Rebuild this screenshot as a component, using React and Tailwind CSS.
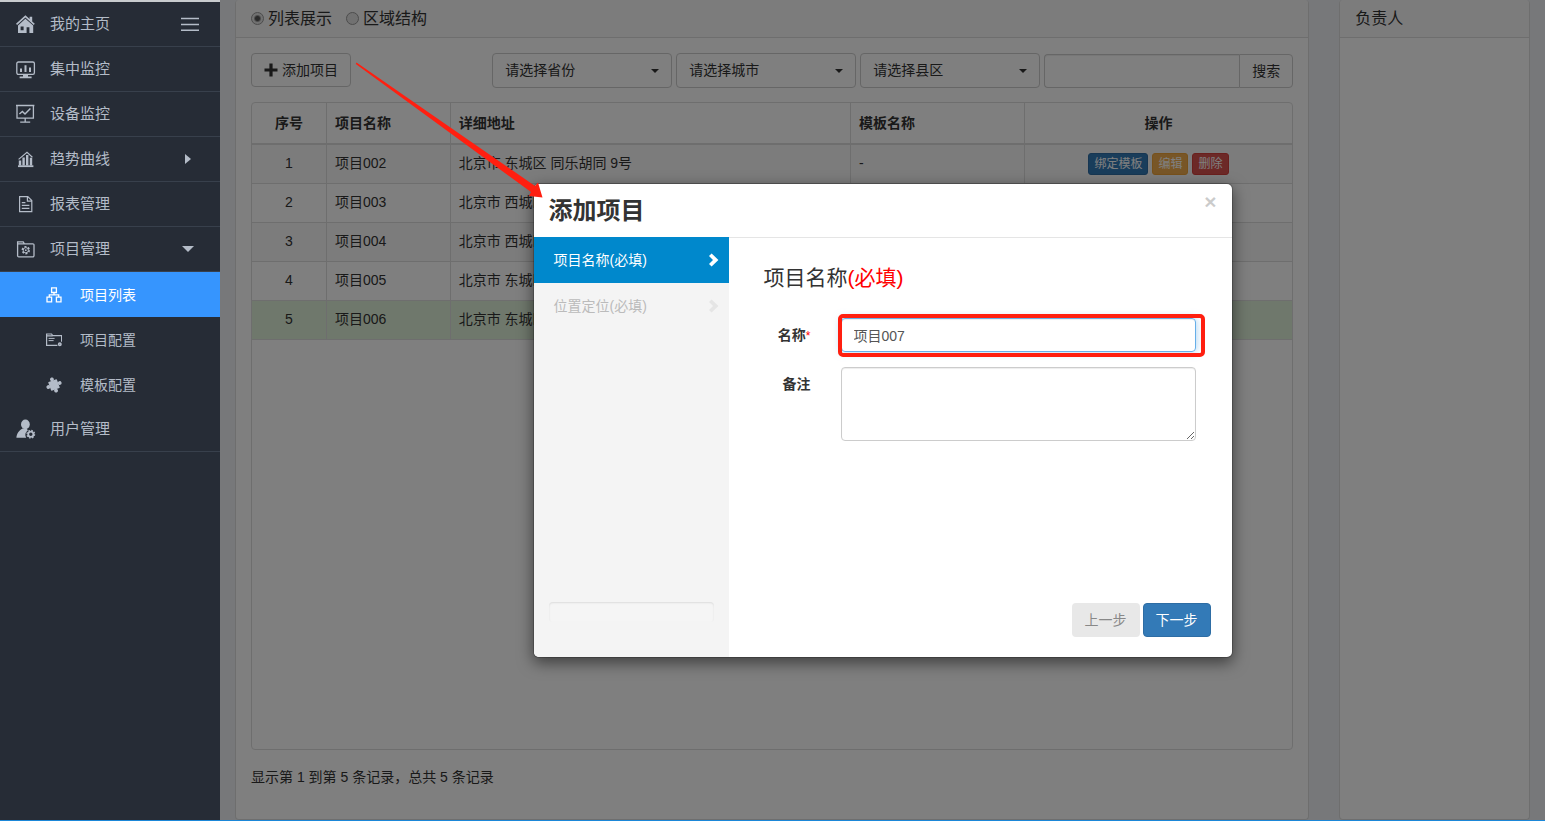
import React, { useState } from 'react';

// Rows of the project table
const projects = [
    { id: 1, name: '项目002', address: '北京市 东城区 同乐胡同 9号', template: '-', editable: true },
    { id: 2, name: '项目003', address: '北京市 西城区' },
    { id: 3, name: '项目004', address: '北京市 西城区' },
    { id: 4, name: '项目005', address: '北京市 东城区' },
    { id: 5, name: '项目006', address: '北京市 东城区', selected: true },
];

const areaFilters = [
    { id: 'province', label: '请选择省份' },
    { id: 'city', label: '请选择城市' },
    { id: 'county', label: '请选择县区' },
];

const HomeIcon = () => (
    <svg className="size-5" viewBox="0 0 20 20" fill="currentColor">
        <path d="M9.4 1.2 0 9.8l1.1 1.3 8.3-7.6 8.3 7.6 1.1-1.3-2.6-2.4V2.8h-2.6v2.2z" />
        <path
            fillRule="evenodd"
            d="M9.4 4.8 2 11.4V19h15.2v-7.6zM4.6 12.4h3v3.8h-3zM10.6 13.2h2.8V19h-2.8z"
        />
    </svg>
);

const MonitorIcon = () => (
    <svg className="size-5" viewBox="0 0 20 20" fill="none" stroke="currentColor" strokeWidth="1.3">
        <rect x="0.8" y="3" width="17.6" height="12.4" rx="1.6" />
        <path strokeWidth="2" d="M5 13V9.5M9.5 13V6.3M14 13V8.6" />
        <path strokeWidth="1.6" d="M7 16.6h5M3.6 18.4h12" />
    </svg>
);

const BoardIcon = () => (
    <svg className="size-5" viewBox="0 0 20 20" fill="none" stroke="currentColor" strokeWidth="1.3">
        <path d="M0 1.5h18.4M1 1.5v12.6h16.4V1.5M9.2 14.2v4M4.2 18.2h10" />
        <path strokeWidth="1.5" d="m3.4 10 3-2.6L9 10l5.4-5.6" />
    </svg>
);

const TrendIcon = () => (
    <svg className="size-5" viewBox="0 0 20 20" fill="none" stroke="currentColor">
        <path strokeWidth="2.4" d="M4 16.5V11.5M7.6 16.5V8.6M11.2 16.5V6M15 16.5V8.8" />
        <path strokeWidth="1.2" d="M2.6 10.4 11 3.4l5.4 4.8" />
        <path strokeWidth="1.8" d="M2 17.2h15.4" />
    </svg>
);

const ReportIcon = () => (
    <svg className="size-5" viewBox="0 0 20 20" fill="none" stroke="currentColor" strokeWidth="1.2">
        <path d="M3.6 2.6h8.2l4 4v11H3.6zM11.4 2.6v4.6h4.4" />
        <path d="M5.8 8.6h3.6M5.8 11.4h7.6M5.8 14.4h7.6" />
    </svg>
);

const ProjectIcon = () => (
    <svg className="size-5" viewBox="0 0 20 20" fill="none" stroke="currentColor" strokeWidth="1.3">
        <path d="M1.6 16.4V2.8h5.6l1.2 2h8.4a1.2 1.2 0 0 1 1.2 1.2v10.6a1.2 1.2 0 0 1-1.2 1.2H2.8a1.2 1.2 0 0 1-1.2-1.4zM1.6 4.8h7" />
        <circle cx="9.8" cy="11.2" r="3.4" strokeWidth="1.6" strokeDasharray="2 1.56" />
        <circle cx="9.8" cy="11.2" r="2.6" strokeWidth="1" />
        <circle cx="9.8" cy="11.2" r="0.9" fill="currentColor" stroke="none" />
    </svg>
);

const UserIcon = () => (
    <svg className="size-5" viewBox="0 0 20 20" fill="currentColor">
        <ellipse cx="9.4" cy="5.4" rx="4.4" ry="4.8" />
        <path d="M6.4 9.4C3.6 11 .6 14 .4 18.8h9.8a5.8 5.8 0 0 1 1.6-7.4l-1-2z" />
        <circle cx="14.8" cy="15.2" r="2.6" fill="none" stroke="currentColor" strokeWidth="1.8" />
        <circle
            cx="14.8"
            cy="15.2"
            r="3.8"
            fill="none"
            stroke="currentColor"
            strokeWidth="1.2"
            strokeDasharray="1.6 1.385"
        />
    </svg>
);

const SitemapIcon = () => (
    <svg className="size-4" viewBox="0 0 16 16" fill="none" stroke="currentColor" strokeWidth="1.3">
        <path d="M5.6.9h4.8v4.6H5.6zM1 10.2h4.6v4.6H1zM10.4 10.2H15v4.6h-4.6zM8 5.5v2.3M3.3 10.2V7.8h9.4v2.4" />
    </svg>
);

const FolderIcon = () => (
    <svg className="size-4" viewBox="0 0 16 16" fill="none" stroke="currentColor" strokeWidth="1.2">
        <path d="M11.4 13.4H.6V2h5l1 1.6h9v6.2M.6 3.8h6" />
        <path strokeWidth="1" d="M2.6 6.4h6M2.6 8.6h5" />
        <circle cx="13.8" cy="12.2" r="1.2" strokeWidth="1.6" />
    </svg>
);

// Puzzle piece: tilted square with a knob on each side
const PuzzleIcon = () => (
    <svg className="size-4" viewBox="0 0 16 16" fill="currentColor">
        <g transform="rotate(-20 8 8)">
            <rect x="3.4" y="3.4" width="9.2" height="9.2" rx="0.6" />
            <circle cx="8" cy="2" r="1.9" />
            <circle cx="14" cy="8" r="1.9" />
            <circle cx="8" cy="14" r="1.9" />
            <circle cx="2" cy="8" r="1.9" />
        </g>
    </svg>
);

const ChevronIcon = () => (
    <svg className="h-[14px] w-[10px]" viewBox="0 0 10 14" fill="currentColor">
        <path d="M2.6.4 0 3l4 4-4 4 2.6 2.6L9.4 7z" />
    </svg>
);

const menuItems = [
    { label: '我的主页', icon: HomeIcon, extra: 'burger' },
    { label: '集中监控', icon: MonitorIcon },
    { label: '设备监控', icon: BoardIcon },
    { label: '趋势曲线', icon: TrendIcon, extra: 'right' },
    { label: '报表管理', icon: ReportIcon },
    {
        label: '项目管理',
        icon: ProjectIcon,
        extra: 'down',
        children: [
            { label: '项目列表', icon: SitemapIcon, active: true },
            { label: '项目配置', icon: FolderIcon },
            { label: '模板配置', icon: PuzzleIcon },
        ],
    },
    { label: '用户管理', icon: UserIcon },
];

// Mark on the right end of a menu row
const MenuExtra = ({ type }) => {
    if (type === 'burger') {
        return (
            <svg className="h-5 w-[18px]" viewBox="0 0 18 20" stroke="currentColor" strokeWidth="1.5">
                <path d="M0 4.5h18M0 10.5h18M0 16.3h18" />
            </svg>
        );
    }
    if (type === 'right') {
        return (
            <svg className="mr-2 h-[10px] w-[6px]" viewBox="0 0 6 10" fill="currentColor">
                <path d="M0 0v10l6-5z" />
            </svg>
        );
    }
    if (type === 'down') {
        return (
            <svg className="mr-[5px] h-[6px] w-3" viewBox="0 0 12 6" fill="currentColor">
                <path d="M0 0h12L6 6z" />
            </svg>
        );
    }
    return null;
};

const Sidebar = () => (
    <nav className="w-[220px] shrink-0 border-t-2 border-[#c8cbce] bg-[#262c36] text-[#b4bcc8]">
        <ul>
            {menuItems.map(({ label, icon: Icon, extra, children }) => (
                <li key={label}>
                    <a
                        href="#"
                        className="flex h-[45px] items-center border-b border-[#38404c] pr-[21px] pl-4 text-[15px]"
                    >
                        <Icon />
                        <span className="ml-[14px] flex-1 pt-px">{label}</span>
                        <MenuExtra type={extra} />
                    </a>
                    {children && (
                        <ul>
                            {children.map(({ label: subLabel, icon: SubIcon, active }) => (
                                <li key={subLabel}>
                                    <a
                                        href="#"
                                        className={
                                            active
                                                ? 'flex h-[45px] items-center bg-[#3695fe] pl-[46px] text-sm text-white'
                                                : 'flex h-[45px] items-center pl-[46px] text-sm'
                                        }
                                    >
                                        <SubIcon />
                                        <span className="ml-[18px]">{subLabel}</span>
                                    </a>
                                </li>
                            ))}
                        </ul>
                    )}
                </li>
            ))}
        </ul>
    </nav>
);

const radioClass =
    'size-[13px] appearance-none rounded-full border border-[#999] bg-[#e2e2e2] checked:bg-[radial-gradient(circle,#555_0_2px,#e2e2e2_4px)]';

const Toolbar = () => (
    <div className="flex items-start justify-between">
        <button className="flex h-[34px] items-center rounded border border-[#ccc] px-3 text-sm">
            <svg className="mr-1 size-[14px]" viewBox="0 0 14 14" fill="currentColor">
                <path d="M5.4.5h3.2v4.9h4.9v3.2H8.6v4.9H5.4V8.6H.5V5.4h4.9z" />
            </svg>
            添加项目
        </button>
        <div className="flex items-end gap-1">
            {areaFilters.map((filter) => (
                <div key={filter.id} className="relative">
                    <select
                        aria-label={filter.label}
                        className="block h-[35px] w-[180px] appearance-none rounded border border-[#ccc] px-3 pb-px text-sm"
                    >
                        <option>{filter.label}</option>
                    </select>
                    <svg
                        className="pointer-events-none absolute top-4 right-[13px] h-1 w-2"
                        viewBox="0 0 8 4"
                        fill="currentColor"
                    >
                        <path d="M0 0h8L4 4z" />
                    </svg>
                </div>
            ))}
            <div className="flex h-[34px]">
                <input
                    type="text"
                    aria-label="搜索"
                    className="w-[195px] rounded-l border border-r-0 border-[#ccc] px-3 text-sm shadow-[inset_0_1px_1px_rgba(0,0,0,0.075)]"
                />
                <button className="rounded-r border border-[#ccc] px-3 text-sm">搜索</button>
            </div>
        </div>
    </div>
);

const ProjectTable = () => (
    <div className="mt-[14px] flex-1 rounded border border-[#ddd]">
        <table className="w-full table-fixed border-separate border-spacing-0 text-left text-sm">
            <colgroup>
                <col className="w-[7.2%]" />
                <col className="w-[11.9%]" />
                <col className="w-[38.5%]" />
                <col className="w-[16.7%]" />
                <col />
            </colgroup>
            <thead>
                <tr className="h-[42px] *:border-r *:border-b-2 *:border-[#ddd] *:px-2 *:last:border-r-0">
                    <th className="text-center">序号</th>
                    <th>项目名称</th>
                    <th>详细地址</th>
                    <th>模板名称</th>
                    <th className="text-center">操作</th>
                </tr>
            </thead>
            <tbody>
                {projects.map((project) => (
                    <tr
                        key={project.id}
                        className={
                            project.selected
                                ? 'h-[39px] bg-[#dff0d8] *:border-r *:border-b *:border-[#ddd] *:px-2 *:pb-[2px] *:last:border-r-0'
                                : 'h-[39px] odd:bg-[#f9f9f9] *:border-r *:border-b *:border-[#ddd] *:px-2 *:pb-[2px] *:last:border-r-0'
                        }
                    >
                        <td className="text-center">{project.id}</td>
                        <td>{project.name}</td>
                        <td className="truncate">{project.address}</td>
                        <td>{project.template}</td>
                        <td>
                            {project.editable && (
                                <div className="flex justify-center gap-1 pt-[2px] text-xs text-white">
                                    <button className="h-[22px] rounded-[3px] border border-[#2e6da4] bg-[#337ab7] px-[5px]">
                                        绑定模板
                                    </button>
                                    <button className="h-[22px] rounded-[3px] border border-[#eea236] bg-[#f0ad4e] px-[5px]">
                                        编辑
                                    </button>
                                    <button className="h-[22px] rounded-[3px] border border-[#d43f3a] bg-[#d9534f] px-[5px]">
                                        删除
                                    </button>
                                </div>
                            )}
                        </td>
                    </tr>
                ))}
            </tbody>
        </table>
    </div>
);

const AddProjectModal = () => {
    const [name, setName] = useState('项目007');
    const [remark, setRemark] = useState('');

    return (
        <div
            role="dialog"
            aria-labelledby="modal-title"
            className="w-[700px] overflow-hidden rounded-md border border-black/20 bg-white bg-clip-padding shadow-[0_5px_15px_rgba(0,0,0,0.5)]"
        >
            <div className="flex h-[53px] items-center justify-between px-[15px]">
                <h3 id="modal-title" className="text-2xl font-bold">
                    添加项目
                </h3>
                <button
                    aria-label="关闭"
                    className="mb-[18px] text-[21px] leading-none font-bold text-black opacity-20"
                >
                    ×
                </button>
            </div>
            <div className="flex h-[420px]">
                {/* Wizard steps */}
                <div className="flex w-[195px] flex-col bg-[#f4f4f4] text-sm">
                    <a
                        href="#"
                        className="flex h-[46px] items-center justify-between bg-[#0088cc] pr-[10px] pl-5 text-white"
                    >
                        项目名称(必填)
                        <ChevronIcon />
                    </a>
                    <a
                        href="#"
                        className="flex h-[46px] items-center justify-between pr-[10px] pl-5 text-[#bbb]"
                    >
                        位置定位(必填)
                        <span className="text-[#e5e5e5]">
                            <ChevronIcon />
                        </span>
                    </a>
                    <div className="mx-[15px] mt-auto mb-[35px] h-5 rounded bg-[#f5f5f5] shadow-[inset_0_1px_2px_rgba(0,0,0,0.1)]" />
                </div>

                {/* Form of the current step */}
                <form className="flex flex-1 flex-col border-t border-[#e5e5e5] pt-6 pr-[21px] pb-5 pl-[35px]">
                    <h4 className="text-[21px] leading-8">
                        项目名称<span className="text-[#f00]">(必填)</span>
                    </h4>
                    <div className="mt-6 mr-[15px] flex items-center">
                        <label htmlFor="name" className="w-[47px] text-right text-sm font-bold">
                            名称<span className="text-xs font-normal text-[#f00]">*</span>
                        </label>
                        <div className="relative ml-[30px] flex-1">
                            <input
                                id="name"
                                type="text"
                                value={name}
                                onChange={(e) => setName(e.target.value)}
                                className="block h-[34px] w-full rounded border border-[#66afe9] px-3 text-sm text-[#555] shadow-[inset_0_1px_1px_rgba(0,0,0,0.075),0_0_8px_rgba(102,175,233,0.6)] outline-none"
                            />
                            <div className="pointer-events-none absolute -top-1 -right-[9px] -bottom-[5px] -left-[3px] rounded-[5px] border-4 border-[#ff1f10]" />
                        </div>
                    </div>
                    <div className="mt-[15px] mr-[15px] flex items-start">
                        <label htmlFor="remark" className="w-[47px] pt-[7px] text-right text-sm font-bold">
                            备注
                        </label>
                        <textarea
                            id="remark"
                            value={remark}
                            onChange={(e) => setRemark(e.target.value)}
                            className="ml-[30px] h-[74px] flex-1 rounded border border-[#ccc] px-3 py-[6px] text-sm shadow-[inset_0_1px_1px_rgba(0,0,0,0.075)]"
                        />
                    </div>
                    <div className="mt-auto flex justify-end gap-[3px] text-sm">
                        <button
                            type="button"
                            disabled
                            className="h-[34px] rounded bg-[#e8e8e8] px-[13px] text-[#888]"
                        >
                            上一步
                        </button>
                        <button
                            type="button"
                            className="h-[34px] rounded border border-[#2e6da4] bg-[#337ab7] px-3 text-white"
                        >
                            下一步
                        </button>
                    </div>
                </form>
            </div>
        </div>
    );
};

const App = () => {
    return (
        <div className="flex min-h-screen border-b border-[#1b87d8] font-['Liberation_Sans','Noto_Sans_CJK_SC',sans-serif] text-[#333]">
            <Sidebar />
            <main className="relative grid flex-1 grid-cols-[5fr_1fr] bg-[#eef0f4]">
                <section className="mx-[15px] flex flex-col rounded border border-t-0 border-[#ddd] bg-white">
                    <div className="flex h-[38px] items-center gap-[14px] rounded-t border-b border-[#ddd] bg-[#f8f8f8] px-[15px]">
                        <label className="flex items-center gap-1">
                            <input type="radio" name="view" defaultChecked className={radioClass} />
                            列表展示
                        </label>
                        <label className="flex items-center gap-1">
                            <input type="radio" name="view" className={radioClass} />
                            区域结构
                        </label>
                    </div>
                    <div className="flex flex-1 flex-col p-[15px]">
                        <Toolbar />
                        <ProjectTable />
                        <p className="my-[17px] text-sm">显示第 1 到第 5 条记录，总共 5 条记录</p>
                    </div>
                </section>
                <section className="mx-[15px] rounded border border-t-0 border-[#ddd] bg-white">
                    <h3 className="flex h-[38px] items-center rounded-t border-b border-[#ddd] bg-[#f8f8f8] px-[15px]">
                        负责人
                    </h3>
                </section>

                {/* Dimmed backdrop with the dialog on top */}
                <div className="absolute inset-0 flex items-start justify-center bg-black/50 pt-[183px]">
                    <AddProjectModal />
                </div>

                {/* Arrow from the add button to the dialog */}
                <svg
                    className="pointer-events-none absolute top-[62px] left-[135px] h-[136px] w-[190px]"
                    viewBox="0 0 190 136"
                    fill="#ff1f10"
                >
                    <path d="M1.5.5 180 124l3-3.500 4.500 15-13.500-1.500 2-4L.8 2z" />
                </svg>
            </main>
        </div>
    );
};

export default App;
